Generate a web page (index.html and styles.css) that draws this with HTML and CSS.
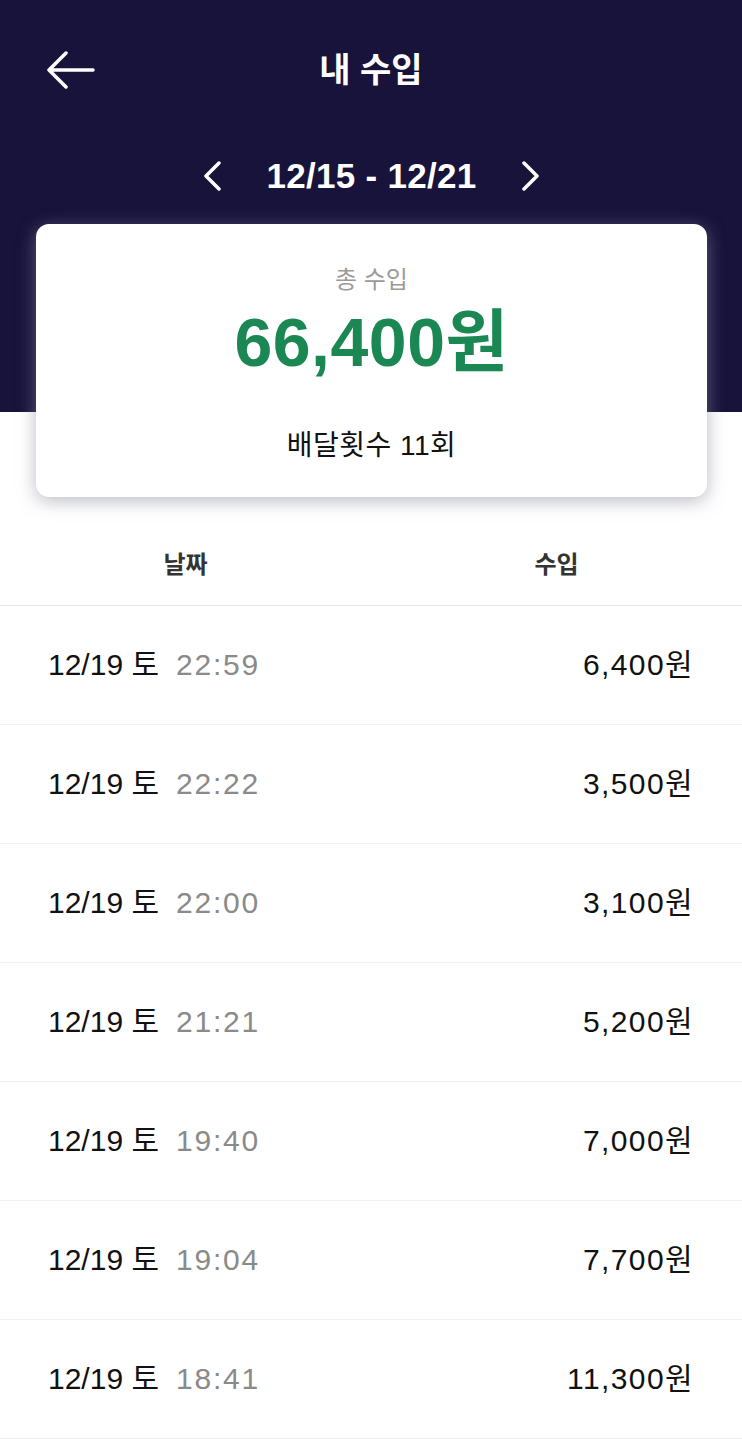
FILE: index.html
```html
<!DOCTYPE html>
<html lang="ko">
<head>
    <meta charset="UTF-8">
    <meta name="viewport" content="width=device-width, initial-scale=1.0">
    <title>내 수입</title>
    <link rel="stylesheet" href="styles.css">
</head>
<body>

    <div class="hero">
        <div class="topbar">
            <button class="back-btn" aria-label="뒤로">
                <svg width="50" height="38" viewBox="0 0 50 38">
                    <path d="M3 19 H47 M20 2 L3 19 L20 36" fill="none" stroke="#fff" stroke-width="3.5" stroke-linecap="round" stroke-linejoin="round"/>
                </svg>
            </button>
            <h1 class="title">내 수입</h1>
            <span></span>
        </div>

        <!-- week selector -->
        <div class="datenav">
            <svg class="chev" width="20" height="30" viewBox="0 0 20 30">
                <path d="M16 2 L3 15 L16 28" fill="none" stroke="#fff" stroke-width="3.5" stroke-linecap="round" stroke-linejoin="round"/>
            </svg>
            <span class="range">12/15 - 12/21</span>
            <svg class="chev" width="20" height="30" viewBox="0 0 20 30">
                <path d="M4 2 L17 15 L4 28" fill="none" stroke="#fff" stroke-width="3.5" stroke-linecap="round" stroke-linejoin="round"/>
            </svg>
        </div>

        <div class="summary-card">
            <p class="label">총 수입</p>
            <p class="total">66,400원</p>
            <p class="count">배달횟수 11회</p>
        </div>
    </div>

    <div class="thead">
        <span>날짜</span>
        <span>수입</span>
    </div>

    <ul class="list">
        <li class="row"><span class="date">12/19 토<span class="time">22:59</span></span><span class="amount">6,400원</span></li>
        <li class="row"><span class="date">12/19 토<span class="time">22:22</span></span><span class="amount">3,500원</span></li>
        <li class="row"><span class="date">12/19 토<span class="time">22:00</span></span><span class="amount">3,100원</span></li>
        <li class="row"><span class="date">12/19 토<span class="time">21:21</span></span><span class="amount">5,200원</span></li>
        <li class="row"><span class="date">12/19 토<span class="time">19:40</span></span><span class="amount">7,000원</span></li>
        <li class="row"><span class="date">12/19 토<span class="time">19:04</span></span><span class="amount">7,700원</span></li>
        <li class="row"><span class="date">12/19 토<span class="time">18:41</span></span><span class="amount">11,300원</span></li>
    </ul>

</body>
</html>
```
FILE: styles.css
```css
body {
    margin: 0;
    background-color: #fff;
    font-family: "Liberation Sans", "Noto Sans CJK KR", sans-serif;
    color: #111;
}

p {
    margin: 0;
}

.hero {
    background: linear-gradient(to bottom, #18133b 0, #18133b 412px, #fff 412px);
    padding: 0 35px 0 36px;
}

.topbar {
    height: 140px;
    display: grid;
    grid-template-columns: 1fr auto 1fr;
    align-items: center;
    margin: 0 -35px 0 -36px;
    padding: 0 46px;
}

.back-btn {
    background: none;
    border: none;
    padding: 0;
    width: 50px;
    height: 38px;
    cursor: pointer;
}

.back-btn svg {
    display: block;
}

.title {
    margin: 0;
    color: #fff;
    font-size: 34px;
    font-weight: bold;
    line-height: 40px;
}

.datenav {
    height: 72px;
    margin-bottom: 12px;
    display: flex;
    justify-content: center;
    align-items: center;
    gap: 43px;
}

.chev {
    display: block;
}

.range {
    color: #fff;
    font-size: 35px;
    font-weight: bold;
    line-height: 40px;
    letter-spacing: 0.3px;
}

.summary-card {
    background: white;
    border-radius: 13px;
    box-shadow: 0 4px 18px rgba(140, 140, 160, 0.6);
    padding: 40px 0 33px;
    display: flex;
    flex-direction: column;
    align-items: center;
}

.label {
    color: #9a9a9a;
    font-size: 24px;
    line-height: 32px;
}

.total {
    margin-top: 6px;
    color: #1b8752;
    font-size: 68px;
    font-weight: bold;
    line-height: 80px;
    letter-spacing: 0.5px;
}

.count {
    margin-top: 46px;
    font-size: 28px;
    line-height: 36px;
    letter-spacing: 0.5px;
}

.thead {
    display: grid;
    grid-template-columns: 1fr 1fr;
    text-align: center;
    padding: 40px 0 12px;
    line-height: 56px;
    font-size: 24px;
    font-weight: bold;
    color: #333;
    border-bottom: 1px solid #e6e6e6;
}

.list {
    list-style: none;
    margin: 0;
    padding: 0;
}

.row {
    height: 118px;
    display: flex;
    justify-content: space-between;
    align-items: center;
    padding: 0 48px 0 48px;
    border-bottom: 1px solid #f1f1f1;
    font-size: 30px;
    line-height: 36px;
}

.time {
    margin-left: 17px;
    color: #8a8a8a;
    letter-spacing: 1.8px;
}

.amount {
    color: #111;
    letter-spacing: 1.4px;
}
```
